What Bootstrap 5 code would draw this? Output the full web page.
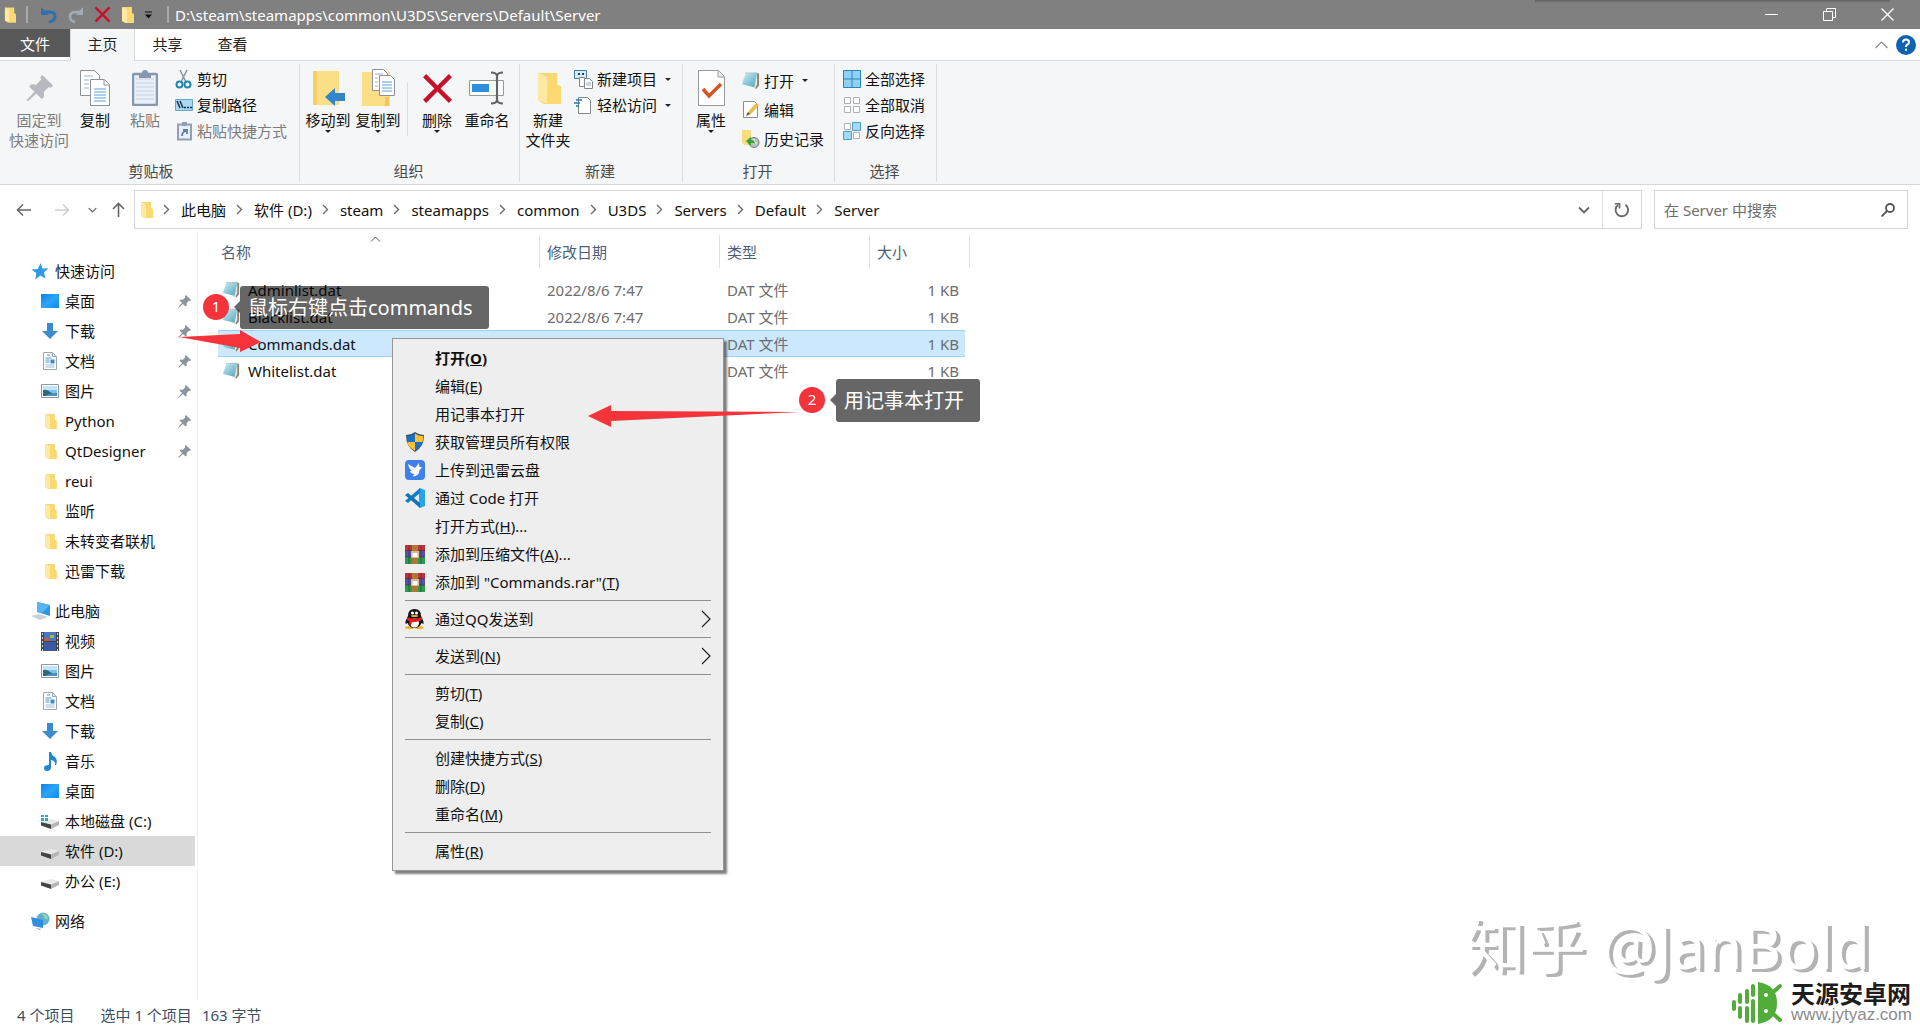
<!DOCTYPE html>
<html lang="zh-CN">
<head>
<meta charset="utf-8">
<meta name="viewport" content="width=device-width, initial-scale=1">
<title>Server</title>
<link href="https://cdn.jsdelivr.net/npm/bootstrap@5.3.0/dist/css/bootstrap.min.css" rel="stylesheet">
<style>
body{font-family:"Noto Sans","Noto Sans CJK SC",sans-serif;font-size:15px;line-height:20px;color:#111;background:#fff;min-height:100vh;overflow-x:hidden}
svg{display:block;flex:none}
.plain{border:0;border-radius:0;padding:0;background:none;color:inherit;font-size:15px;line-height:20px}
a.plain{text-decoration:none}
/* title bar */
.titlebar{height:29px;background:#808080;color:#fff;padding-left:4px;position:relative}
.titlebar::after{content:"";position:absolute;top:0;right:30px;width:355px;height:3px;background:linear-gradient(#606060,#808080)}
.titlebar .qsep{width:2px;height:17px;background:#a9a9a9;margin:0 6px 0 14px}
.titlebar .qsep:first-of-type{margin:0 0 0 10px}
.qat{gap:10px;padding-left:12px}
.path-title{font-size:15px;line-height:24px}
.winbtn{width:58px;height:29px}
/* tabs */
.tabs{height:32px;border-bottom:1px solid #d9dadb}
.tabs .tab{width:65px;height:32px;line-height:30px;text-align:center;color:#222}
.tabs .tab-file{width:70px;height:28px;line-height:30px;background:#595959;color:#fff}
.tabs .tab-on{background:#f5f6f7;border:1px solid #d9dadb;border-width:0 1px}
/* ribbon */
.ribbon{height:124px;background:#f5f6f7;border-bottom:1px solid #d5d6d7}
.rgroup{border-right:1px solid #dcdddf;margin:3px 0;padding-left:3px;height:118px}
.rlabel{color:#4a4a4a;padding:0 5px 1px 0}
.big{width:50px;height:90px;padding-top:6px;display:flex;flex-direction:column;align-items:center}
.big.wide{width:62px}
.big .ico{height:36px;margin-bottom:4px;display:flex;align-items:center;justify-content:center}
.off{color:#7c7c7c}
.caret{width:0;height:0;border:3px solid transparent;border-top-color:#222;border-bottom:0}
.vline{width:1px;height:54px;background:#dcdddf}
.stack{padding-top:2px}
.stack .plain{display:flex;align-items:center;height:26px;gap:4px;padding-left:1px}
.stack.loose .plain{height:29px}
/* address */
.addr{padding:5px 12px 0 0;height:45px}
.addr-nav{width:134px}
.boxed{height:39px;border:1px solid #d5d5d5}
.crumbs{gap:10px;padding-left:5px}
.crumbs .plain{color:#111}
.search{width:254px;margin-left:12px}
.search input{border:0;background:none;font-size:15px;line-height:24px;height:30px;padding:0 0 0 9px;color:#111;outline:0;min-width:0}
.search input::placeholder{color:#6d6d6d;opacity:1}
/* sidebar */
.side{width:198px;border-right:1px solid #f1f1f1;padding-top:26px}
.side .plain{display:flex;align-items:center;height:30px;width:195px;padding-left:41px}
.side .plain.root{padding-left:31px}
.side .plain.last{margin-bottom:10px}
.side .plain .ic{width:18px;margin-right:6px}
.side .root .ic{width:20px;margin-right:4px}
.side .plain.sel{background:#d9d9d9}
.side .pin{margin-left:auto;margin-right:4px}
/* files */
.files{table-layout:fixed;width:747px;border-collapse:separate;border-spacing:0}
.files th{font-weight:400;color:#4c607a;padding:5px 0 8px}
.files th div{height:33px;line-height:34px;border-right:1px solid #e2e2e2;padding-left:7px}
.files th:first-child div{padding-left:3px}
.files th:last-child div{margin-right:-5px}
.files td{height:27px;padding:0 0 0 7px;color:#6d6d6d;border:solid transparent;border-width:1px 0}
.files td:first-child{padding-left:4px;color:#111}
.files td:last-child{padding-right:6px;text-align:right}
.files .picked td{background:#cce8ff;border-color:#99d1ff}
.sortmark{position:absolute;left:370px;top:236px}
.status{height:30px;color:#3b4f63;padding-left:17px;gap:10px}
/* context menu */
.ctx{position:absolute;left:392px;top:338px;width:332px;background:#eee;border:1px solid #979797;padding:5px 12px;box-shadow:3px 3px 2px rgba(0,0,0,.5)}
.ctx .plain{display:flex;align-items:center;width:100%;height:28px;color:#111}
.ctx .ic{width:20px;margin-right:10px}
.ctx hr{margin:4px 0;border-top:1px solid #919191;opacity:1}
.ctx svg.more{margin-left:auto}
/* annotations */
.tip{position:absolute;background:rgba(0,0,0,.6);color:#fff;font-size:20px;line-height:43px;padding:0 16px 0 8px;border-radius:3px;white-space:nowrap}
.tip::before{content:"";position:absolute;left:-6px;top:15px;border:6px solid transparent;border-left:0;border-right-color:rgba(0,0,0,.6)}
.num{position:absolute;width:26px;height:26px;border-radius:50%;background:#f5333a;color:#fff;text-align:center;line-height:25px}
.arrow{position:absolute}
.zhihu{position:absolute;right:50px;bottom:46px;font-size:60px;line-height:76px;color:#fff;text-shadow:4px 3px 0 #b3b3b3;white-space:nowrap}
.brandbox{position:absolute;right:8px;bottom:5px}
.brand-cn{font-family:"Noto Sans CJK SC",sans-serif;font-weight:700;font-size:24px;line-height:24px;color:#1d1d1d}
.brand-url{font-family:"Liberation Sans",sans-serif;font-size:17px;line-height:20px;color:#8b8b8b}
</style>
<script src="https://cdn.jsdelivr.net/npm/bootstrap@5.3.0/dist/js/bootstrap.bundle.min.js"></script>
</head>
<body class="d-flex flex-column position-relative">
<svg width="0" height="0" class="position-absolute" aria-hidden="true">
<defs>
<linearGradient id="gb" x1="0" y1="0" x2="1" y2="1"><stop offset="0" stop-color="#d3ecf2"/><stop offset="1" stop-color="#4aa6c0"/></linearGradient>
<linearGradient id="gd" x1="0" y1="0" x2="1" y2="1"><stop offset="0" stop-color="#0a84e8"/><stop offset=".5" stop-color="#2ca4f8"/><stop offset="1" stop-color="#0c8cf0"/></linearGradient>
</defs>
<symbol id="folder" viewBox="0 0 13 18"><path d="M1 1h10v6l2 1v9H4L1 15z" fill="#f7d673"/><path d="M1 1l5 2v14l-5-2z" fill="#fde9a4"/><path d="M6 3h5v5l2 1v8H6z" fill="#f9d970"/></symbol>
<symbol id="note" viewBox="0 0 20 20"><path d="M6 2l11-1 2 2v12l-3 4-4-1z" fill="#e9e6df"/><path d="M17 2l2 1v12l-3 4-1-1 2-4z" fill="#8a7f6c"/><path d="M5 2h12l-3 15-13-3z" fill="url(#gb)"/><path d="M5 2h12" stroke="#9ab" stroke-dasharray="1 1"/></symbol>
<symbol id="pin" viewBox="0 0 14 14"><path d="M8.500 0L14 5.500l-1 1-1.300-.2-2.500 2.500.2 2.500-1.200 1.200L5.300 9.600 1 13.600l-.6-.6 4-4.300L1.600 6l1.200-1.200 2.500.2 2.500-2.500L7.500 1z" fill="#8b939c"/></symbol>
<symbol id="desk" viewBox="0 0 18 14"><path d="M0 0h18v14H0z" fill="url(#gd)"/></symbol>
<symbol id="down" viewBox="0 0 18 18"><path d="M6 1h6v8h5l-8 8-8-8h5z" fill="#3b8bd0"/></symbol>
<symbol id="doc" viewBox="0 0 18 18"><path d="M2.500.5h9l4 4v13h-13z" fill="#fff" stroke="#9aa6b2"/><path d="M11.500 1v3.500H15" fill="#dfe8f0" stroke="#9aa6b2"/><path d="M6 3h3M4.500 6h6M4.500 8h4M4.500 10h4" stroke="#4a94cc"/><path d="M9.500 7.500h4v4h-4z" fill="#3a8cc8"/><path d="M4.500 13h9M4.500 15h9" stroke="#9dbcd4"/></symbol>
<symbol id="pic" viewBox="0 0 18 14"><path d="M.5.5h17v13H.5z" fill="#fff" stroke="#8d98a5"/><path d="M2 2h14v10H2z" fill="#7cc0ec"/><path d="M2 2h14v4H2z" fill="#c4e4f7"/><path d="M2 6q4-1 7 2t7 1v3H2z" fill="#2d6a7a"/><path d="M6 11q4-2 10-1v2H5z" fill="#4a8ed0"/></symbol>
<symbol id="drive" viewBox="0 0 18 12"><path d="M0 5l10-3 8 2-8 3z" fill="#e8e8e8"/><path d="M0 5l10 2.500V12L0 8.500z" fill="#444"/><path d="M10 7.500L18 4v4l-8 4z" fill="#b5b5b5"/></symbol>
<symbol id="docs" viewBox="0 0 30 36"><g fill="#fff" stroke="#8e9299"><path d="M.5.5h14l5 5v20H.5z"/><path d="M10.500 9.500h14l5 5v21h-19z"/><path d="M24 9.500v5.500h5.500"/></g><path d="M4 6h9M4 10h5M4 14h5M4 18h5" stroke="#9ab0c4"/><path d="M14 19h12M14 22h12M14 25h12M14 28h12M14 31h12" stroke="#5f9fd6"/></symbol>
<symbol id="redx" viewBox="0 0 30 30"><path d="M1 4l3-3 11 11L26 1l3 3-11 11 11 11-3 3-11-11L4 29l-3-3 11-11z" fill="#c8102a"/></symbol>
<symbol id="rar" viewBox="0 0 20 19"><path d="M0 0h20v6H0z" fill="#c2303a"/><path d="M0 6h20v6H0z" fill="#5a4fa8"/><path d="M0 12h20v7H0z" fill="#2c9a50"/><path d="M0 5.500h20M0 12h20M4 0v19M16 0v19" stroke="#333" stroke-opacity=".6"/><path d="M7 0h6v19H7z" fill="#b07834"/><path d="M6 6h8v7H6z" fill="#d8b890"/><path d="M7.500 8h5v4h-5z" fill="#fff"/></symbol>
<symbol id="sep" viewBox="0 0 8 11"><path d="M1 1l4.500 4.500L1 10" fill="none" stroke="#6b6b6b" stroke-width="1.400"/></symbol>
<symbol id="chev" viewBox="0 0 12 8"><path d="M1 1.500l5 5 5-5" fill="none" stroke="#666" stroke-width="1.800"/></symbol>
<symbol id="more" viewBox="0 0 10 18"><path d="M1 1l8 8-8 8" fill="none" stroke="#222" stroke-width="1.200"/></symbol>
</svg>

<header class="titlebar d-flex align-items-center">
  <svg width="12" height="18"><use href="#folder"/></svg>
  <span class="qsep"></span>
  <div class="qat d-flex align-items-center">
    <button class="plain" aria-label="撤消"><svg width="18" height="18" viewBox="0 0 18 18"><path d="M3 6h7q5 0 5 4.500T9 16" fill="none" stroke="#2f6fae" stroke-width="3"/><path d="M1 1v8h8z" fill="#2f6fae"/></svg></button>
    <button class="plain" aria-label="恢复"><svg width="16" height="18" viewBox="0 0 16 18"><path d="M13 6H8Q2 6 2 10.500T7 16" fill="none" stroke="#a3abb3" stroke-width="2.500"/><path d="M15 1v8H8z" fill="#a3abb3"/></svg></button>
    <button class="plain" aria-label="删除"><svg width="17" height="17"><use href="#redx"/></svg></button>
    <button class="plain" aria-label="新建文件夹"><svg width="13" height="18"><use href="#folder"/></svg></button>
    <button class="plain" aria-label="自定义快速访问工具栏"><svg width="9" height="8" viewBox="0 0 9 8"><path d="M1 1h7" stroke="#111"/><path d="M1 3.500h7l-3.500 4z" fill="#111"/></svg></button>
  </div>
  <span class="qsep"></span>
  <div class="path-title flex-grow-1">D:\steam\steamapps\common\U3DS\Servers\Default\Server</div>
  <div class="d-flex pe-1">
    <button class="plain winbtn d-flex justify-content-center align-items-center" aria-label="最小化"><svg width="13" height="13"><path d="M0 6.500h13" stroke="#fff"/></svg></button>
    <button class="plain winbtn d-flex justify-content-center align-items-center" aria-label="还原"><svg width="13" height="13" fill="none" stroke="#fff"><path d="M.5 3.500h9v9h-9z"/><path d="M3.500 3V.5h9v9H10"/></svg></button>
    <button class="plain winbtn d-flex justify-content-center align-items-center" aria-label="关闭"><svg width="13" height="13"><path d="M.5.5l12 12M12.500.5l-12 12" stroke="#fff" stroke-width="1.300"/></svg></button>
  </div>
</header>

<nav class="tabs d-flex">
  <a href="#" class="plain tab tab-file">文件</a>
  <a href="#" class="plain tab tab-on">主页</a>
  <a href="#" class="plain tab">共享</a>
  <a href="#" class="plain tab">查看</a>
  <div class="ms-auto d-flex align-items-center gap-2">
    <button class="plain" aria-label="折叠功能区"><svg width="13" height="8" viewBox="0 0 13 8"><path d="M.5 7l6-6 6 6" fill="none" stroke="#8b8b8b" stroke-width="1.200"/></svg></button>
    <button class="plain me-1" aria-label="帮助"><svg width="20" height="20" viewBox="0 0 20 20"><circle cx="10" cy="10" r="10" fill="#0f62ad"/><path d="M7 7.500Q7 4.500 10 4.500t3 2.700Q13 8.700 11.200 9.700 10 10.500 10 12M10 13.800v2" fill="none" stroke="#fff" stroke-width="2"/></svg></button>
  </div>
</nav>

<section class="ribbon d-flex">
  <div class="rgroup d-flex flex-column justify-content-between ps-2" style="width:300px">
    <div class="d-flex">
      <button class="plain big wide off"><span class="ico"><svg width="27" height="27" style="opacity:.6"><use href="#pin"/></svg></span>固定到<br>快速访问</button>
      <button class="plain big"><span class="ico"><svg width="30" height="36"><use href="#docs"/></svg></span>复制</button>
      <button class="plain big off"><span class="ico"><svg width="26" height="36" viewBox="0 0 26 36"><rect x="1" y="4" width="24" height="31" rx="1.500" fill="#eaf0f8" stroke="#8797b1" stroke-width="2.500"/><path d="M4 9h18M4 13h18M4 17h18M4 21h18M4 25h18M4 29h18" stroke="#c3cfdf"/><path d="M7 3h3a3 3 0 0 1 6 0h3v5H7z" fill="#8797b1"/></svg></span>粘贴</button>
      <div class="stack d-flex flex-column ps-1">
        <button class="plain"><svg width="18" height="20" viewBox="0 0 18 20"><path d="M5 1l6 12M12 1L6 13" stroke="#8a939c" stroke-width="1.500"/><g fill="none" stroke="#1d8aa8" stroke-width="2"><circle cx="4.500" cy="15.500" r="3"/><circle cx="12.500" cy="15.500" r="3"/></g></svg>剪切</button>
        <button class="plain"><svg width="18" height="12" viewBox="0 0 18 12"><path d="M.5.500h17v11H.5z" fill="#a9d8f3" stroke="#6aa5c8"/><path d="M2 2l3 7M5 2l3 7M9 8.500h2M12 8.500h2M15 8.500h2" stroke="#16324a" stroke-width="1.500"/></svg>复制路径</button>
        <button class="plain off"><svg width="18" height="19" viewBox="0 0 18 19"><rect x="3" y="2.500" width="13" height="15" fill="#e9eff6" stroke="#8fa0b8" stroke-width="2"/><path d="M7 0h5v4H7z" fill="#8fa0b8"/><path d="M7 14q0-4 4-5M8 8h4v4" fill="none" stroke="#5d7ea6" stroke-width="1.800"/></svg>粘贴快捷方式</button>
      </div>
    </div>
    <div class="rlabel text-center">剪贴板</div>
  </div>
  <div class="rgroup d-flex flex-column justify-content-between" style="width:220px">
    <div class="d-flex">
      <button class="plain big"><span class="ico"><svg width="34" height="36" viewBox="0 0 34 36"><path d="M2 1h26v34H2z" fill="#fbdf86"/><path d="M2 1h4v34H2z" fill="#f5d06a"/><path d="M14 27l10-9v5h10v8H24v5z" fill="#2f86cf"/></svg></span>移动到<span class="caret"></span></button>
      <button class="plain big"><span class="ico"><svg width="34" height="38" viewBox="0 0 34 38"><path d="M1 3h28v34H1z" fill="#fbdf86"/><path d="M24 28h4v9h-4z" fill="#f0c95e"/><g fill="#fff" stroke="#8e9299"><path d="M11.500.5h11l4 4v17h-15z"/><path d="M18.500 6.500h11l4 4v16h-15z"/></g><path d="M21 13h10M21 16h10M21 19h10M21 22h10" stroke="#5f9fd6"/><path d="M14 5h8M14 9h3M14 13h3M14 17h3" stroke="#9ab0c4"/></svg></span>复制到<span class="caret"></span></button>
      <span class="vline mx-1" style="margin-top:18px"></span>
      <button class="plain big"><span class="ico"><svg width="31" height="31"><use href="#redx"/></svg></span>删除<span class="caret"></span></button>
      <button class="plain big"><span class="ico"><svg width="36" height="34" viewBox="0 0 36 34"><path d="M.5 9.500h34v15H.5z" fill="#fff" stroke="#9a9a9a"/><path d="M3 13h17v8H3z" fill="#2f8fdc"/><path d="M22 1.500q5 0 6 3 1-3 6-3M28 4v26M22 32.500q5 0 6-3 1 3 6 3" fill="none" stroke="#5e6368" stroke-width="2.200"/></svg></span>重命名</button>
    </div>
    <div class="rlabel text-center">组织</div>
  </div>
  <div class="rgroup d-flex flex-column justify-content-between" style="width:163px">
    <div class="d-flex">
      <button class="plain big"><span class="ico"><svg width="25" height="35"><use href="#folder"/></svg></span>新建<br>文件夹</button>
      <div class="stack d-flex flex-column">
        <button class="plain"><svg width="19" height="19" viewBox="0 0 19 19"><path d="M.5.5h12v8H.5z" fill="#d4ebf7" stroke="#4c7c9c"/><path d="M4 4h2M8 4h2" stroke="#17466a" stroke-width="2"/><path d="M5.500 7.500h5v9h-5zM10.500 8.500h5l3 3v7h-8z" fill="#fff" stroke="#7d8790"/><path d="M12 13h5M12 15h5" stroke="#9ab"/></svg>新建项目<span class="caret ms-1"></span></button>
        <button class="plain"><svg width="19" height="19" viewBox="0 0 19 19"><path d="M4.500 1.500h9l3 3v13h-12z" fill="#fff" stroke="#7d8790"/><path d="M2 4h6M0 7h6M2 10h3" stroke="#247bb4" stroke-width="1.600"/></svg>轻松访问<span class="caret ms-1"></span></button>
      </div>
    </div>
    <div class="rlabel text-center">新建</div>
  </div>
  <div class="rgroup d-flex flex-column justify-content-between" style="width:152px">
    <div class="d-flex">
      <button class="plain big"><span class="ico"><svg width="27" height="36" viewBox="0 0 27 36"><path d="M.5.5h20l6 6v29H.5z" fill="#fff" stroke="#9a9a9a"/><path d="M20 .5V7h6.500" fill="#eee" stroke="#9a9a9a"/><path d="M5 19l6 7L23 14" fill="none" stroke="#d8531e" stroke-width="3.500"/></svg></span>属性<span class="caret"></span></button>
      <div class="stack loose d-flex flex-column ps-1">
        <button class="plain"><svg width="19" height="19"><use href="#note"/></svg>打开<span class="caret ms-1"></span></button>
        <button class="plain"><svg width="19" height="19" viewBox="0 0 19 19"><path d="M2.500 1.500h11l3 3v13h-14z" fill="#fff" stroke="#8c8c8c"/><path d="M5 16l2-4L15 3l3 2-8 9z" fill="#eabc4a"/><path d="M5 16l2-4 2 2z" fill="#555"/></svg>编辑</button>
        <button class="plain"><svg width="19" height="19" viewBox="0 0 19 19"><path d="M1 1h9v15H4l-3-2z" fill="#f9dc7e"/><circle cx="13" cy="13.500" r="5" fill="#b9bfc3" stroke="#777"/><path d="M13 10v4h3" fill="none" stroke="#fff"/><path d="M5 12l5-4v3q4 0 4 4-2-2-4-1v3z" fill="#35a035"/></svg>历史记录</button>
      </div>
    </div>
    <div class="rlabel text-center">打开</div>
  </div>
  <div class="rgroup d-flex flex-column justify-content-between" style="width:102px">
    <div class="stack d-flex flex-column ps-1">
      <button class="plain"><svg width="18" height="18" viewBox="0 0 18 18"><path d="M0 0h18v18H0z" fill="#8fd0f3"/><path d="M.5.5h17v17H.5zM9 0v18M0 9h18" fill="none" stroke="#2a86b8"/></svg>全部选择</button>
      <button class="plain"><svg width="18" height="18" viewBox="0 0 18 18" fill="#fff" stroke="#b0b0b0"><path d="M1.500 1.500h6v6h-6zM10.500 1.500h6v6h-6zM1.500 10.500h6v6h-6zM10.500 10.500h6v6h-6z"/></svg>全部取消</button>
      <button class="plain"><svg width="18" height="18" viewBox="0 0 18 18"><path d="M1.500 1.500h6v6h-6zM10.500 10.500h6v6h-6z" fill="#fff" stroke="#b0b0b0"/><path d="M9.500.5h8v8h-8zM.5 9.500h8v8h-8z" fill="#a4dbfa" stroke="#4a9dcc"/></svg>反向选择</button>
    </div>
    <div class="rlabel text-center">选择</div>
  </div>
</section>

<section class="addr d-flex">
  <div class="addr-nav d-flex align-items-center ps-3 boxed border-0">
    <button class="plain" aria-label="后退"><svg width="16" height="14" viewBox="0 0 16 14"><path d="M15 7H2M7 1.500L1.500 7 7 12.500" fill="none" stroke="#666" stroke-width="1.600"/></svg></button>
    <button class="plain" style="margin-left:22px" aria-label="前进"><svg width="16" height="14" viewBox="0 0 16 14"><path d="M1 7h13M9 1.500L14.500 7 9 12.500" fill="none" stroke="#d0d0d0" stroke-width="1.600"/></svg></button>
    <button class="plain" style="margin-left:18px" aria-label="最近位置"><svg width="9" height="6"><use href="#chev"/></svg></button>
    <button class="plain" style="margin-left:15px" aria-label="上移"><svg width="13" height="16" viewBox="0 0 13 16"><path d="M6.500 15V2M1 7l5.500-5.500L12 7" fill="none" stroke="#666" stroke-width="1.600"/></svg></button>
  </div>
  <div class="boxed d-flex align-items-center flex-grow-1">
    <div class="crumbs d-flex align-items-center flex-grow-1">
      <svg width="13" height="18"><use href="#folder"/></svg>
      <svg width="8" height="11"><use href="#sep"/></svg><a href="#" class="plain">此电脑</a>
      <svg width="8" height="11"><use href="#sep"/></svg><a href="#" class="plain">软件 (D:)</a>
      <svg width="8" height="11"><use href="#sep"/></svg><a href="#" class="plain">steam</a>
      <svg width="8" height="11"><use href="#sep"/></svg><a href="#" class="plain">steamapps</a>
      <svg width="8" height="11"><use href="#sep"/></svg><a href="#" class="plain">common</a>
      <svg width="8" height="11"><use href="#sep"/></svg><a href="#" class="plain">U3DS</a>
      <svg width="8" height="11"><use href="#sep"/></svg><a href="#" class="plain">Servers</a>
      <svg width="8" height="11"><use href="#sep"/></svg><a href="#" class="plain">Default</a>
      <svg width="8" height="11"><use href="#sep"/></svg><a href="#" class="plain">Server</a>
    </div>
    <button class="plain px-2 me-1" aria-label="历史位置"><svg width="12" height="8"><use href="#chev"/></svg></button>
    <button class="plain h-100 border-start d-flex justify-content-center align-items-center" style="width:39px" aria-label="刷新"><svg width="16" height="16" viewBox="0 0 16 16"><path d="M11.500 2.800A6.300 6.300 0 1 1 4 3" fill="none" stroke="#666" stroke-width="1.800"/><path d="M.8 1.800H5.500V6.500" fill="none" stroke="#666" stroke-width="1.600"/></svg></button>
  </div>
  <form class="boxed search d-flex align-items-center pe-2">
    <label class="visually-hidden" for="q">搜索</label>
    <input id="q" class="flex-grow-1" type="text" placeholder="在 Server 中搜索">
    <svg class="me-1" width="14" height="14" viewBox="0 0 14 14" fill="none" stroke="#555" stroke-width="1.800"><circle cx="9" cy="5" r="4"/><path d="M6 8l-5.500 5.500"/></svg>
  </form>
</section>

<main class="d-flex flex-grow-1">
  <nav class="side">
    <a href="#" class="plain root"><span class="ic"><svg width="18" height="17" viewBox="0 0 18 17"><path d="M9.500 0l2 5.500 6-.3-4.600 4 1.600 6.300-5.200-3-5 4 1-6.500-5-3.500 6.500-.5z" fill="#2e9be6"/></svg></span>快速访问</a>
    <a href="#" class="plain"><span class="ic"><svg width="18" height="14"><use href="#desk"/></svg></span>桌面<svg class="pin" width="13" height="13"><use href="#pin"/></svg></a>
    <a href="#" class="plain"><span class="ic"><svg width="18" height="18"><use href="#down"/></svg></span>下载<svg class="pin" width="13" height="13"><use href="#pin"/></svg></a>
    <a href="#" class="plain"><span class="ic"><svg width="18" height="18"><use href="#doc"/></svg></span>文档<svg class="pin" width="13" height="13"><use href="#pin"/></svg></a>
    <a href="#" class="plain"><span class="ic"><svg width="18" height="14"><use href="#pic"/></svg></span>图片<svg class="pin" width="13" height="13"><use href="#pin"/></svg></a>
    <a href="#" class="plain"><span class="ic"><svg class="ms-auto me-auto" width="13" height="17"><use href="#folder"/></svg></span>Python<svg class="pin" width="13" height="13"><use href="#pin"/></svg></a>
    <a href="#" class="plain"><span class="ic"><svg class="mx-auto" width="13" height="17"><use href="#folder"/></svg></span>QtDesigner<svg class="pin" width="13" height="13"><use href="#pin"/></svg></a>
    <a href="#" class="plain"><span class="ic"><svg class="mx-auto" width="13" height="17"><use href="#folder"/></svg></span>reui</a>
    <a href="#" class="plain"><span class="ic"><svg class="mx-auto" width="13" height="17"><use href="#folder"/></svg></span>监听</a>
    <a href="#" class="plain"><span class="ic"><svg class="mx-auto" width="13" height="17"><use href="#folder"/></svg></span>未转变者联机</a>
    <a href="#" class="plain last"><span class="ic"><svg class="mx-auto" width="13" height="17"><use href="#folder"/></svg></span>迅雷下载</a>
    <a href="#" class="plain root"><span class="ic"><svg width="20" height="18" viewBox="0 0 20 18"><path d="M6 0l13 3v11L6 10z" fill="#2f97e0"/><path d="M6 0l13 3-8 8-5-1z" fill="#58b4f0"/><path d="M0 14l8-2 9 3-8 3z" fill="#c9d2da"/></svg></span>此电脑</a>
    <a href="#" class="plain"><span class="ic"><svg width="18" height="19" viewBox="0 0 18 19"><path d="M0 0h18v19H0z" fill="#444"/><path d="M3 0h12v9H3z" fill="#4a76c8"/><path d="M3 10h12v9H3z" fill="#3a5aa8"/><path d="M3 7q4-3 7 2H3z" fill="#d0563a"/><path d="M9 3h4v3H9z" fill="#a8c030"/><path d="M1.500 1v18M16.500 1v18" stroke="#ddd" stroke-dasharray="2 2"/></svg></span>视频</a>
    <a href="#" class="plain"><span class="ic"><svg width="18" height="14"><use href="#pic"/></svg></span>图片</a>
    <a href="#" class="plain"><span class="ic"><svg width="18" height="18"><use href="#doc"/></svg></span>文档</a>
    <a href="#" class="plain"><span class="ic"><svg width="18" height="18"><use href="#down"/></svg></span>下载</a>
    <a href="#" class="plain"><span class="ic"><svg width="18" height="19" viewBox="0 0 18 19"><path d="M8 0h2q1 4 4 5 3 3 1 8h-1q1-4-4-5v7q0 4-4 4-3 0-3-3 0-3 5-3z" fill="#1f88d0"/></svg></span>音乐</a>
    <a href="#" class="plain"><span class="ic"><svg width="18" height="14"><use href="#desk"/></svg></span>桌面</a>
    <a href="#" class="plain"><span class="ic"><svg width="18" height="15" viewBox="0 0 18 15"><use href="#drive" y="3" width="18" height="12"/><path d="M0 1h3v2H0zM4 1h3v2H4zM0 4h3v3H0zM4 4h3v3H4z" fill="#29a8d8"/></svg></span>本地磁盘 (C:)</a>
    <a href="#" class="plain sel"><span class="ic"><svg class="mt-1" width="18" height="12"><use href="#drive"/></svg></span>软件 (D:)</a>
    <a href="#" class="plain last"><span class="ic"><svg class="mt-1" width="18" height="12"><use href="#drive"/></svg></span>办公 (E:)</a>
    <a href="#" class="plain root"><span class="ic"><svg width="19" height="18" viewBox="0 0 19 18"><circle cx="12" cy="7" r="6.500" fill="#5bb2d6"/><path d="M10 1q6 0 7 6-4 1-4-3z" fill="#9fd4a8"/><path d="M0 5l12 3v8L2 14z" fill="#2f8fdc"/><path d="M5 16l6 1-3 1z" fill="#aaa"/></svg></span>网络</a>
  </nav>
  <div class="flex-grow-1" style="padding-left:20px">
    <table class="files">
      <colgroup><col style="width:322px"><col style="width:180px"><col style="width:150px"><col style="width:95px"></colgroup>
      <thead><tr><th><div>名称</div></th><th><div>修改日期</div></th><th><div>类型</div></th><th><div>大小</div></th></tr></thead>
      <tbody>
        <tr><td><span class="d-flex align-items-center gap-2"><svg width="18" height="19"><use href="#note"/></svg>Adminlist.dat</span></td><td>2022/8/6 7:47</td><td>DAT 文件</td><td>1 KB</td></tr>
        <tr><td><span class="d-flex align-items-center gap-2"><svg width="18" height="19"><use href="#note"/></svg>Blacklist.dat</span></td><td>2022/8/6 7:47</td><td>DAT 文件</td><td>1 KB</td></tr>
        <tr class="picked"><td><span class="d-flex align-items-center gap-2"><svg width="18" height="19"><use href="#note"/></svg>Commands.dat</span></td><td></td><td>DAT 文件</td><td>1 KB</td></tr>
        <tr><td><span class="d-flex align-items-center gap-2"><svg width="18" height="19"><use href="#note"/></svg>Whitelist.dat</span></td><td></td><td>DAT 文件</td><td>1 KB</td></tr>
      </tbody>
    </table>
  </div>
</main>
<footer class="status d-flex align-items-center"><span class="me-3">4 个项目</span><span>选中 1 个项目</span><span>163 字节</span></footer>

<svg class="sortmark" width="11" height="6" viewBox="0 0 11 6"><path d="M1 5.500l4.500-4.500L10 5.500" fill="none" stroke="#555"/></svg>

<div class="ctx">
  <button class="plain fw-bold"><span class="ic"></span><span>打开(<u>O</u>)</span></button>
  <button class="plain"><span class="ic"></span><span>编辑(<u>E</u>)</span></button>
  <button class="plain"><span class="ic"></span><span>用记事本打开</span></button>
  <button class="plain"><span class="ic"><svg width="20" height="20" viewBox="0 0 20 20"><path d="M10 0q4 3 9 3 0 12-9 17Q1 15 1 3q5 0 9-3z" fill="#3a5560"/><path d="M10 10h7.700q-1 5.500-7.700 8.800z" fill="#1a70c8"/><path d="M10 1.500q3 2.500 8 2.500 0 3-.3 6H10zM10 10v8.800Q3.500 15.500 2.300 10z" fill="#fcc032"/><path d="M10 1.500V10H2.300Q2 7 2 4q5 0 8-2.500z" fill="#1a70c8"/></svg></span><span>获取管理员所有权限</span></button>
  <button class="plain"><span class="ic"><svg width="20" height="20" viewBox="0 0 20 20"><rect width="20" height="20" rx="4" fill="#3f7fee"/><path d="M3 4l7 4 4-5 .5 4 3 .5-3 2.500q0 6-7 6.500l2-2.500q-4-.5-4.500-3h2Q4 9 3 4z" fill="#fff"/></svg></span><span>上传到迅雷云盘</span></button>
  <button class="plain"><span class="ic"><svg width="20" height="20" viewBox="0 0 20 20"><path d="M15 0l5 2v16l-5 2-1-1V1z" fill="#29a4ec"/><path d="M15 0v5L3 15l-3-2z" fill="#1080c8"/><path d="M15 20v-5L3 5 0 7z" fill="#0f74b8"/></svg></span><span>通过 Code 打开</span></button>
  <button class="plain"><span class="ic"></span><span>打开方式(<u>H</u>)...</span></button>
  <button class="plain"><span class="ic"><svg width="20" height="19"><use href="#rar"/></svg></span><span>添加到压缩文件(<u>A</u>)...</span></button>
  <button class="plain"><span class="ic"><svg width="20" height="19"><use href="#rar"/></svg></span><span>添加到 "Commands.rar"(<u>T</u>)</span></button>
  <hr>
  <button class="plain"><span class="ic"><svg width="19" height="20" viewBox="0 0 19 20"><ellipse cx="4.500" cy="18.500" rx="4.500" ry="1.500" fill="#f5b81c"/><ellipse cx="14" cy="18.500" rx="4.500" ry="1.500" fill="#f5b81c"/><path d="M3 7q0-7 6.500-7T16 7q3 5 2.500 8l-2-1q-2 5-7 5t-7-5l-2 1Q0 12 3 7z" fill="#111"/><ellipse cx="9.500" cy="14" rx="4.500" ry="4.500" fill="#fff"/><path d="M2 8q7 3 15 0v3q-7 3-10 2l-1 3-2-.5.5-3L2 11z" fill="#e02020"/><circle cx="7.500" cy="4" r="1.600" fill="#fff"/><circle cx="11.500" cy="4" r="1.600" fill="#fff"/><ellipse cx="9.500" cy="7" rx="3.500" ry="1" fill="#f5b81c"/></svg></span><span>通过QQ发送到</span><svg class="more" width="10" height="18"><use href="#more"/></svg></button>
  <hr>
  <button class="plain"><span class="ic"></span><span>发送到(<u>N</u>)</span><svg class="more" width="10" height="18"><use href="#more"/></svg></button>
  <hr>
  <button class="plain"><span class="ic"></span><span>剪切(<u>T</u>)</span></button>
  <button class="plain"><span class="ic"></span><span>复制(<u>C</u>)</span></button>
  <hr>
  <button class="plain"><span class="ic"></span><span>创建快捷方式(<u>S</u>)</span></button>
  <button class="plain"><span class="ic"></span><span>删除(<u>D</u>)</span></button>
  <button class="plain"><span class="ic"></span><span>重命名(<u>M</u>)</span></button>
  <hr>
  <button class="plain"><span class="ic"></span><span>属性(<u>R</u>)</span></button>
</div>

<div class="num" style="left:203px;top:294px">1</div>
<div class="tip" style="left:240px;top:286px">鼠标右键点击commands</div>
<svg class="arrow" style="left:179px;top:330px" width="83" height="22"><path d="M0 7l61-3V0l21 12-21 10v-4z" fill="#f5333a"/></svg>
<div class="num" style="left:799px;top:387px">2</div>
<div class="tip" style="left:836px;top:379px">用记事本打开</div>
<svg class="arrow" style="left:588px;top:404px" width="212" height="24"><path d="M0 12L23 1v6l189 1-189 9v6z" fill="#f5333a"/></svg>
<div class="zhihu">知乎 @JanBold</div>
<div class="brandbox d-flex align-items-center gap-2">
  <svg width="52" height="42" viewBox="0 0 52 42"><g stroke="#52ac3a" stroke-width="4" stroke-linecap="round"><path d="M3 20v7M9 13v7M9 26v9M16 9v11M16 26v13M22 4v9M22 19v20M40 12l9-8M40 30l9 8" /></g><path d="M27 0Q46 3 46 21T27 42z" fill="#52ac3a"/><circle cx="35" cy="13" r="2" fill="#fff"/><circle cx="35" cy="29" r="2" fill="#fff"/></svg>
  <div><div class="brand-cn">天源安卓网</div><div class="brand-url">www.jytyaz.com</div></div>
</div>
</body>
</html>
